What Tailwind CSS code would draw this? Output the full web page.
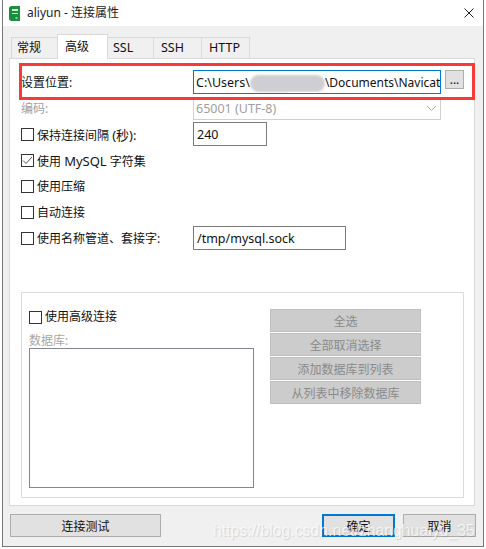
<!DOCTYPE html>
<html lang="zh">
<head>
    <meta charset="UTF-8" />
    <script src="https://cdn.jsdelivr.net/npm/@tailwindcss/browser@4"></script>
    <title>aliyun - 连接属性</title>
</head>
<body class="bg-white h-[549px] w-[486px] overflow-hidden text-[12px] leading-[16px] text-[#111] font-['Noto_Sans','Noto_Sans_CJK_SC',sans-serif]">
    <div class="relative h-[547px] w-[482px] ml-[2px] border-x border-b border-[#777] bg-[#f0f0f0] flex flex-col">
        <!-- title bar -->
        <div class="h-[26px] bg-white flex items-center pl-[6px] shrink-0">
            <svg width="11" height="15" viewBox="0 0 11 15"><path d="M0 1.500L2 0h9v15H2L0 13.500z" fill="#1d8f3c"/><path d="M3 3h6v2H3zM3 7h6v1H3z" fill="#cdeed6"/><path d="M6.500 11h2v2h-2z" fill="#7fd197"/></svg>
            <span class="ml-[7px] text-[#222]">aliyun - 连接属性</span>
            <svg class="ml-auto mr-[9px]" width="10" height="10" viewBox="0 0 10 10"><path d="M.5.500l9 9M9.500.500l-9 9" stroke="#222" fill="none"/></svg>
        </div>

        <!-- tabs -->
        <div class="flex h-[32px] pl-[8px] items-end shrink-0">
            <div class="h-[21px] w-[47px] pl-[5px] border border-[#d9d9d9] border-b-0 flex items-center">常规</div>
            <div class="h-[25px] w-[51px] pl-[7px] -ml-px -mb-px border border-[#d9d9d9] border-b-0 bg-white flex items-center relative z-10">高级</div>
            <div class="h-[21px] w-[47px] pl-[5px] -ml-px border border-[#d9d9d9] border-b-0 flex items-center text-[12.5px]">SSL</div>
            <div class="h-[21px] w-[49px] pl-[7px] -ml-px border border-[#d9d9d9] border-b-0 flex items-center text-[12.5px]">SSH</div>
            <div class="h-[21px] w-[49px] pl-[7px] -ml-px border border-[#d9d9d9] border-b-0 flex items-center text-[12.5px]">HTTP</div>
        </div>

        <!-- tab panel -->
        <div class="relative ml-[6px] w-[466px] h-[448px] bg-white border border-[#d9d9d9] shrink-0 pt-[10px] pl-[11px]">
            <!-- location row, red box lies over it -->
            <div class="flex items-center h-[26px]">
                <span class="w-[172px] pt-[2px]">设置位置:</span>
                <div class="w-[248px] h-[24px] border border-[#0078d7] pl-[2px] pt-[2px] flex items-center overflow-hidden whitespace-nowrap relative text-[12.5px]">
                    <span>C:\Users\</span><span class="inline-block w-[75px] shrink-0"></span><span class="text-[12px]">\Documents\Navicat</span>
                    <span class="absolute left-[56px] top-[4px] w-[75px] h-[17px] rounded-full bg-[#cfcfd3] blur-[1px]"></span>
                    <span class="absolute left-[94px] bottom-[-1px] w-[29px] h-[2px] bg-white"></span>
                </div>
                <div class="ml-[4px] w-[19px] h-[19px] -mt-[5px] bg-[#e1e1e1] border border-[#adadad] flex items-center justify-center">...</div>
            </div>

            <div class="flex items-center h-[26px] text-[#a0a0a0]">
                <span class="w-[172px] pt-[2px]">编码:</span>
                <div class="w-[248px] h-[23px] border border-[#d0d0d0] pl-[2px] flex items-center justify-between text-[12.5px]">
                    <span class="pt-[2px]">65001 (UTF-8)</span>
                    <svg class="mr-[3px]" width="11" height="7" viewBox="0 0 11 7"><path d="M1 1l4.500 4.500L10 1" stroke="#aaa" fill="none"/></svg>
                </div>
            </div>

            <div class="flex items-center h-[26px]">
                <div class="w-[172px] flex items-center gap-[3px]"><span class="w-[13px] h-[13px] border border-[#333]"></span><span class="pt-[2px]">保持连接间隔 <span class="text-[13px]">(秒):</span></span></div>
                <div class="w-[74px] h-[24px] border border-[#7a7a7a] pl-[3px] pt-[2px] flex items-center text-[12.5px]">240</div>
            </div>

            <div class="flex items-center gap-[3px] h-[26px]">
                <span class="w-[13px] h-[13px] border border-[#333] flex items-center justify-center">
                    <svg width="11" height="11" viewBox="0 0 11 11"><path d="M1 5.500l3 3L10 2" stroke="#555" fill="none"/></svg>
                </span>
                <span class="pt-[2px]">使用 <span class="text-[13px]">MySQL</span> 字符集</span>
            </div>
            <div class="flex items-center gap-[3px] h-[26px]"><span class="w-[13px] h-[13px] border border-[#333]"></span><span class="pt-[2px]">使用压缩</span></div>
            <div class="flex items-center gap-[3px] h-[26px]"><span class="w-[13px] h-[13px] border border-[#333]"></span><span class="pt-[2px]">自动连接</span></div>

            <div class="flex items-center h-[26px]">
                <div class="w-[172px] flex items-center gap-[3px]"><span class="w-[13px] h-[13px] border border-[#333]"></span><span class="pt-[2px]">使用名称管道、套接字:</span></div>
                <div class="w-[153px] h-[24px] border border-[#7a7a7a] pl-[3px] pt-[2px] flex items-center text-[12.5px]">/tmp/mysql.sock</div>
            </div>

            <!-- advanced group -->
            <div class="mt-[41px] w-[443px] h-[206px] border border-[#dcdcdc] pt-[16px] pl-[7px] flex">
                <div class="w-[241px]">
                    <div class="flex items-center gap-[3px] h-[16px]"><span class="w-[13px] h-[13px] border border-[#333]"></span><span>使用高级连接</span></div>
                    <div class="text-[#a8a8a8] mt-[8px] h-[15px]">数据库:</div>
                    <div class="w-[225px] h-[140px] border border-[#828790] bg-white"></div>
                </div>
                <div class="flex flex-col gap-px text-[#8a8a8a]">
                    <div class="w-[151px] h-[23px] pt-[2px] bg-[#cccccc] border border-[#bfbfbf] flex items-center justify-center">全选</div>
                    <div class="w-[151px] h-[23px] pt-[2px] bg-[#cccccc] border border-[#bfbfbf] flex items-center justify-center">全部取消选择</div>
                    <div class="w-[151px] h-[23px] pt-[2px] bg-[#cccccc] border border-[#bfbfbf] flex items-center justify-center">添加数据库到列表</div>
                    <div class="w-[151px] h-[23px] pt-[2px] bg-[#cccccc] border border-[#bfbfbf] flex items-center justify-center">从列表中移除数据库</div>
                </div>
            </div>
        </div>

        <!-- footer buttons -->
        <div class="flex mt-[8px] pl-[7px] pr-[7px]">
            <div class="w-[151px] h-[23px] pt-[2px] bg-[#e1e1e1] border border-[#adadad] flex items-center justify-center">连接测试</div>
            <div class="ml-auto w-[73px] h-[23px] pt-[2px] bg-[#e1e1e1] border-2 border-[#0078d7] flex items-center justify-center">确定</div>
            <div class="ml-[8px] w-[73px] h-[23px] pt-[2px] bg-[#e1e1e1] border border-[#adadad] flex items-center justify-center">取消</div>
        </div>

        <!-- annotation and watermark over the dialog -->
        <div class="absolute left-[16px] top-[63px] w-[456px] h-[37px] border-[3px] border-[#f93838]"></div>
        <div class="absolute left-[210px] top-[520px] font-['Liberation_Sans',sans-serif] text-[15.8px] leading-[22px] text-white/70 [text-shadow:1px_1px_1px_rgba(0,0,0,0.12)] whitespace-nowrap">https://blog.csdn.net/zhanghuaiyu_35</div>
    </div>
</body>
</html>
